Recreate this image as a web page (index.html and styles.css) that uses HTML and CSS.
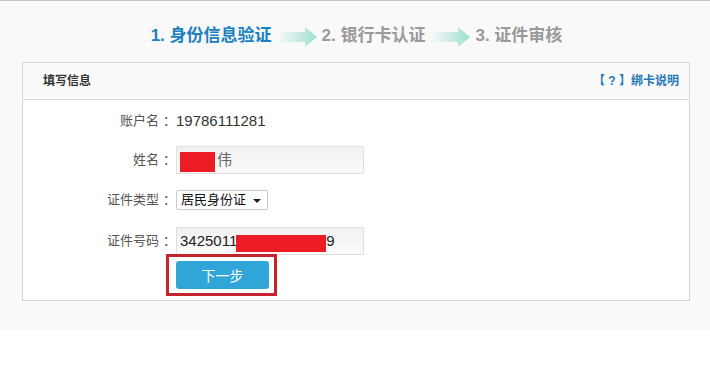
FILE: index.html
```html
<!DOCTYPE html>
<html lang="zh-CN">
<head>
<meta charset="utf-8">
<title>填写信息</title>
<link rel="stylesheet" href="styles.css">
</head>
<body>
<div class="page">
  <div class="steps">
    <span class="step step-active">1. 身份信息验证</span>
    <svg class="step-arrow" width="40" height="20" viewBox="0 0 40 20">
      <defs>
        <linearGradient id="ga" x1="0" y1="0" x2="1" y2="0">
          <stop offset="0" stop-color="#f9f9f9"/>
          <stop offset="1" stop-color="#9edfd0"/>
        </linearGradient>
      </defs>
      <path d="M0 5 H28 V0 L40 10 L28 20 V15 H0 Z" fill="url(#ga)"/>
    </svg>
    <span class="step">2. 银行卡认证</span>
    <svg class="step-arrow" width="40" height="20" viewBox="0 0 40 20">
      <defs>
        <linearGradient id="gb" x1="0" y1="0" x2="1" y2="0">
          <stop offset="0" stop-color="#f9f9f9"/>
          <stop offset="1" stop-color="#9edfd0"/>
        </linearGradient>
      </defs>
      <path d="M0 5 H28 V0 L40 10 L28 20 V15 H0 Z" fill="url(#gb)"/>
    </svg>
    <span class="step">3. 证件审核</span>
  </div>

  <div class="panel">
    <div class="panel-head">
      <span class="panel-title">填写信息</span>
      <a class="panel-help">【 ? 】绑卡说明</a>
    </div>
    <div class="panel-body">
      <div class="row row-text">
        <span class="label">账户名<span class="colon">：</span></span>
        <span class="value">19786111281</span>
      </div>
      <div class="row row-name">
        <span class="label">姓名<span class="colon">：</span></span>
        <div class="field">
          <span class="redact redact-name"></span>
          <span class="field-text gray">伟</span>
        </div>
      </div>
      <div class="row row-select">
        <span class="label">证件类型<span class="colon">：</span></span>
        <div class="select">
          <span class="select-text">居民身份证</span>
          <span class="select-arrow"></span>
        </div>
      </div>
      <div class="row row-id">
        <span class="label">证件号码<span class="colon">：</span></span>
        <div class="field">
          <span class="field-text">3425011</span>
          <span class="redact redact-id"></span>
          <span class="field-text">9</span>
        </div>
      </div>
      <div class="row row-btn">
        <span class="label"></span>
        <div class="btn-wrap">
          <button class="btn">下一步</button>
          <span class="highlight"></span>
        </div>
      </div>
    </div>
  </div>
</div>
</body>
</html>
```

FILE: styles.css
```css
* { box-sizing: border-box; }

html, body {
  margin: 0;
  padding: 0;
  background: #ffffff;
  font-family: "Liberation Sans", "Noto Sans CJK SC", sans-serif;
}

.page {
  background: #f9f9f9;
  border-top: 1px solid #c4c4c4;
  padding: 21px 20px 29px 22px;
}

.steps {
  display: flex;
  justify-content: center;
  align-items: center;
  height: 28px;
  padding-left: 1px;
}

.step {
  font-size: 17px;
  font-weight: bold;
  line-height: 28px;
  color: #9a9a9a;
  white-space: nowrap;
}

.step-active { color: #1a80c1; }

.step-arrow {
  display: block;
  margin: 2px 5px 0 5px;
}

.panel {
  margin-top: 12px;
  border: 1px solid #d6d6d6;
  background: #ffffff;
}

.panel-head {
  height: 37px;
  background: #fafafa;
  border-bottom: 1px solid #d9d9d9;
  display: flex;
  align-items: center;
  justify-content: space-between;
  padding: 0 10px 0 20px;
}

.panel-title {
  font-size: 12px;
  font-weight: bold;
  color: #333333;
  line-height: 16px;
}

.panel-help {
  font-size: 12px;
  font-weight: bold;
  color: #2478b6;
  line-height: 16px;
  white-space: pre;
  cursor: pointer;
}

.panel-body {
  padding: 7px 0 11px 0;
}

.row {
  display: flex;
  align-items: center;
}

.label {
  width: 150px;
  flex: none;
  text-align: right;
  font-size: 13px;
  color: #555555;
  line-height: 18px;
  padding-right: 1px;
}

.colon {
  display: inline-block;
  width: 13px;
  padding-left: 4px;
  text-align: left;
}

.row-text { height: 28px; }
.row-name { margin-top: 11px; }
.row-select { margin-top: 16px; }
.row-id { margin-top: 17px; }
.row-btn { margin-top: 6px; }

.value {
  margin-left: 3px;
  font-size: 15px;
  color: #333333;
  line-height: 20px;
}

.field {
  margin-left: 3px;
  width: 188px;
  height: 28px;
  border: 1px solid #e0e0e0;
  background: linear-gradient(to bottom, #f1f1f1, #fbfbfb);
  display: flex;
  align-items: center;
  padding-left: 3px;
}

.field-text {
  font-size: 15px;
  color: #222222;
  line-height: 20px;
}

.field-text.gray { color: #666666; margin-left: 2px; }

.redact {
  display: block;
  background: #ec1c24;
}

.redact-name {
  width: 35px;
  height: 20px;
  align-self: flex-end;
  margin-bottom: 1px;
}

.redact-id {
  width: 90px;
  height: 17px;
  margin-top: 4px;
  margin-left: -1px;
}

.select {
  margin-left: 3px;
  width: 92px;
  height: 20px;
  border: 1px solid #c9c9c9;
  border-radius: 2px;
  background: #ffffff;
  display: flex;
  align-items: center;
  padding-left: 4px;
}

.select-text {
  font-size: 13px;
  color: #111111;
  line-height: 18px;
}

.select-arrow {
  margin-left: 7px;
  width: 0;
  height: 0;
  border-left: 4px solid transparent;
  border-right: 4px solid transparent;
  border-top: 4px solid #222222;
  margin-top: 1px;
}

.btn-wrap {
  position: relative;
  margin-left: 3px;
}

.btn {
  display: block;
  width: 93px;
  height: 28px;
  border: none;
  border-radius: 3px;
  background: #30a6d8;
  color: #ffffff;
  font-family: "Noto Sans CJK SC", sans-serif;
  font-size: 14px;
  line-height: 28px;
  padding: 0;
}

.highlight {
  position: absolute;
  left: -10px;
  top: -7px;
  right: -8px;
  bottom: -7px;
  border: 3px solid #c6242c;
  pointer-events: none;
}
```
